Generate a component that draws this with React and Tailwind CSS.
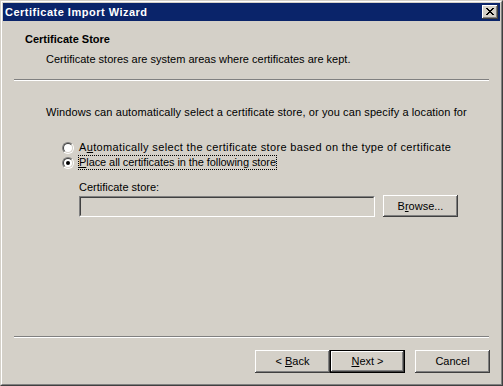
import React from 'react';

const font = { fontFamily: '"Liberation Sans", Arial, sans-serif' };

// classic raised button bevel
const raised =
  'shadow-[inset_-1px_-1px_#404040,inset_1px_1px_#ffffff,inset_-2px_-2px_#808080,inset_2px_2px_#d4d0c8]';

function Radio({ checked }) {
  return (
    <div className="w-[12px] h-[12px] rounded-full border border-[#808080] border-r-white border-b-white shrink-0">
      <div className="w-full h-full rounded-full border border-[#404040] border-r-[#d4d0c8] border-b-[#d4d0c8] bg-white flex items-center justify-center">
        {checked && <div className="w-[4px] h-[4px] rounded-full bg-black" />}
      </div>
    </div>
  );
}

function Button({ children, isDefault }) {
  if (isDefault) {
    return (
      <div className="w-[75px] h-[23px] border border-black">
        <div className={`w-full h-full bg-[#d4d0c8] flex items-center justify-center ${raised}`}>
          {children}
        </div>
      </div>
    );
  }
  return (
    <div className={`w-[75px] h-[23px] bg-[#d4d0c8] flex items-center justify-center ${raised}`}>
      {children}
    </div>
  );
}

export default function App() {
  return (
    <div style={font} className="w-[503px] h-[386px] text-[11px] leading-[13px] text-black select-none">
      {/* Window frame */}
      <div className="w-full h-full border border-[#d4d0c8] border-r-[#404040] border-b-[#404040]">
        <div className="w-full h-full border border-white border-r-[#808080] border-b-[#808080] bg-[#d4d0c8] p-px flex flex-col">
          {/* Title bar */}
          <div className="h-[18px] bg-[#0a246a] flex items-center justify-between pl-[2px] pr-[2px] shrink-0">
            <span className="text-white font-bold text-[11px] tracking-[0.5px]">Certificate Import Wizard</span>
            <div className={`w-[16px] h-[14px] bg-[#d4d0c8] flex items-center justify-center ${raised}`}>
              <svg width="8" height="7" viewBox="0 0 8 7" className="mb-px">
                <path d="M0 0h2v1h1v1h2V1h1V0h2v1H7v1H6v1H5v1h1v1h1v1h1v1H6V6H5V5H3v1H2v1H0V6h1V5h1V4h1V3H2V2H1V1H0z" fill="#000" />
              </svg>
            </div>
          </div>

          {/* Header */}
          <div className="ml-[22px] mt-[12px] font-bold">Certificate Store</div>
          <div className="ml-[43px] mt-[7px]">Certificate stores are system areas where certificates are kept.</div>
          <div className="mx-[11px] mt-[13px] border-t border-[#808080] border-b border-b-white" />

          {/* Body */}
          <div className="ml-[43px] mt-[25px] tracking-[0.1px]">
            Windows can automatically select a certificate store, or you can specify a location for
          </div>

          <div className="ml-[59px] mt-[21px] flex items-center">
            <Radio />
            <span className="ml-[4px] border border-transparent tracking-[0.35px]">
              A<span className="underline">u</span>tomatically select the certificate store based on the type of certificate
            </span>
          </div>
          <div className="ml-[59px] mt-[0px] flex items-center">
            <Radio checked />
            <span className="ml-[4px] border border-dotted border-black tracking-[-0.08px]">
              <span className="underline">P</span>lace all certificates in the following store
            </span>
          </div>

          <div className="ml-[76px] mt-[11px]">Certificate store:</div>
          <div className="ml-[76px] mt-[1px] flex items-start">
            <div className="mt-px w-[296px] h-[21px] border border-[#808080] border-r-white border-b-white">
              <div className="w-full h-full border border-[#404040] border-r-[#d4d0c8] border-b-[#d4d0c8] bg-[#d4d0c8]" />
            </div>
            <div className="ml-[8px] w-[75px] h-[22px]">
              <div className={`w-full h-full bg-[#d4d0c8] flex items-center justify-center ${raised}`}>
                <span>
                  B<span className="underline">r</span>owse...
                </span>
              </div>
            </div>
          </div>

          {/* Footer */}
          <div className="mx-[11px] mt-[119px] border-t border-[#808080] border-b border-b-white" />
          <div className="mt-[12px] mr-[10px] flex justify-end">
            <Button>
              <span>
                &lt; <span className="underline">B</span>ack
              </span>
            </Button>
            <Button isDefault>
              <span>
                <span className="underline">N</span>ext &gt;
              </span>
            </Button>
            <div className="ml-[10px]">
              <Button>Cancel</Button>
            </div>
          </div>
        </div>
      </div>
    </div>
  );
}
